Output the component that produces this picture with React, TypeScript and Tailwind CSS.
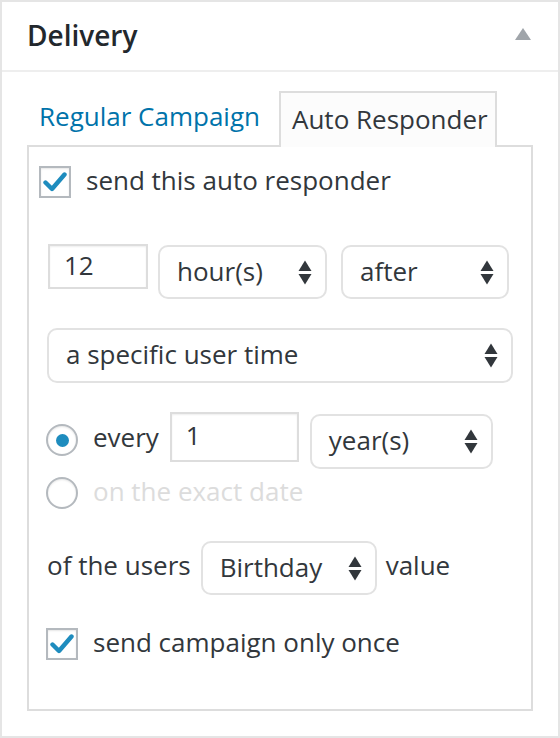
import React from "react";

const font = { fontFamily: '"Open Sans", "Noto Sans", sans-serif' };

function Check() {
  return (
    <span className="flex h-[32px] w-[32px] shrink-0 items-center justify-center border-2 border-[#b4b9be] bg-white shadow-[inset_0_1px_2px_rgba(0,0,0,0.1)]">
      <svg width="24" height="22" viewBox="0 0 24 22">
        <path d="M2.5 11.5 L9 18 L21.5 3.5" fill="none" stroke="#1e8cbe" strokeWidth="4.4" strokeLinecap="round" strokeLinejoin="round" />
      </svg>
    </span>
  );
}

function Radio({ on, className = "" }: { on?: boolean; className?: string }) {
  return (
    <span className={"flex h-[32px] w-[32px] shrink-0 items-center justify-center rounded-full border-2 border-[#b4b9be] bg-white shadow-[inset_0_1px_2px_rgba(0,0,0,0.1)] " + className}>
      {on && <span className="h-[13px] w-[13px] rounded-full bg-[#1e8cbe]" />}
    </span>
  );
}

function Arrows() {
  return (
    <svg width="14" height="25" viewBox="0 0 14 25" className="shrink-0">
      <path d="M7 0.5 L13.5 11 L0.5 11 Z" fill="#32373c" />
      <path d="M0.5 14 L13.5 14 L7 24.5 Z" fill="#32373c" />
    </svg>
  );
}

function Select({ label, className }: { label: string; className: string }) {
  return (
    <div className={"flex shrink-0 items-center justify-between rounded-[10px] border-2 border-[#e2e2e2] bg-white pl-[17px] pr-[13px] text-[26px] text-[#32373c] " + className}>
      <span className="pb-[3px] leading-none">{label}</span>
      <Arrows />
    </div>
  );
}

function Input({ value, className }: { value: string; className: string }) {
  return (
    <div className={"flex shrink-0 items-center border-2 border-[#dddddd] bg-white pl-[14px] text-[26px] leading-none text-[#32373c] shadow-[inset_0_1px_2px_rgba(0,0,0,0.07)] " + className}>
      <span className="pb-[4px]">{value}</span>
    </div>
  );
}

export default function App() {
  return (
    <div style={font} className="box-border flex h-[738px] w-[560px] flex-col border-2 border-[#e5e5e5] bg-white text-[#32373c]">
      <div className="flex h-[70px] shrink-0 items-center justify-between border-b-2 border-[#eeeeee] pl-[25px] pr-[27px]">
        <h2 className="pb-[3px] text-[28px] font-semibold leading-none text-[#23282d]">Delivery</h2>
        <svg width="16" height="12" viewBox="0 0 16 12" className="mb-[4px]">
          <path d="M8 0 L16 12 L0 12 Z" fill="#a0a5aa" />
        </svg>
      </div>
      <div className="flex flex-col pl-[25px] pt-[17px]">
        <div className="flex h-[56px] items-end">
          <div className="mb-[16px] ml-[12px] text-[26px] leading-none text-[#0073aa]">Regular Campaign</div>
          <div className="relative z-10 mb-[-2px] ml-[19px] flex h-[56px] w-[218px] items-center border-2 border-b-0 border-[#dddddd] bg-[#fcfcfc] pl-[11px] text-[26px] leading-none text-[#32373c]">
            <span className="pb-[3px]">Auto Responder</span>
          </div>
        </div>
        <div className="box-border flex h-[566px] w-[506px] flex-col border-2 border-[#dddddd] pl-[9px]">
          <div className="mt-[19px] flex h-[32px] items-center gap-[15px] pl-[1px]">
            <Check />
            <span className="pb-[4px] text-[26px] leading-none">send this auto responder</span>
          </div>
          <div className="mt-[46px] flex h-[55px] items-start pl-[10px]">
            <Input value="12" className="h-[45px] w-[100px]" />
            <Select label="hour(s)" className="ml-[10px] mt-[1px] h-[54px] w-[169px]" />
            <Select label="after" className="ml-[14px] mt-[1px] h-[54px] w-[168px]" />
          </div>
          <div className="mt-[29px] flex pl-[9px]">
            <Select label="a specific user time" className="h-[55px] w-[466px]" />
          </div>
          <div className="mt-[29px] flex h-[57px] items-start pl-[8px]">
            <Radio on className="mt-[12px]" />
            <span className="ml-[15px] mt-[12px] text-[26px] leading-none">every</span>
            <Input value="1" className="ml-[11px] h-[50px] w-[129px]" />
            <Select label="year(s)" className="ml-[11px] mt-[2px] h-[55px] w-[183px]" />
          </div>
          <div className="mt-[8px] flex h-[32px] items-center pl-[8px]">
            <Radio />
            <span className="ml-[15px] pb-[4px] text-[26px] leading-none text-[#dcdcdc]">on the exact date</span>
          </div>
          <div className="mt-[32px] flex h-[54px] items-center pl-[9px]">
            <span className="pb-[6px] text-[26px] leading-none">of the users</span>
            <Select label="Birthday" className="ml-[10px] h-[54px] w-[176px]" />
            <span className="ml-[9px] pb-[6px] text-[26px] leading-none">value</span>
          </div>
          <div className="mt-[33px] flex h-[32px] items-center gap-[15px] pl-[8px]">
            <Check />
            <span className="pb-[4px] text-[26px] leading-none">send campaign only once</span>
          </div>
        </div>
      </div>
    </div>
  );
}
